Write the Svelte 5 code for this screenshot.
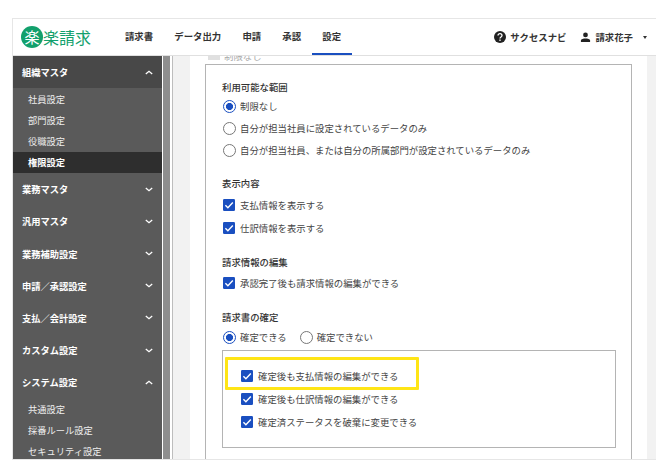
<script lang="ts">
  const nav = ['請求書', 'データ出力', '申請', '承認', '設定'];

  interface Group {
    name: string;
    open: boolean;
    items: string[];
  }

  const groups: Group[] = [
    { name: '組織マスタ', open: true, items: ['社員設定', '部門設定', '役職設定', '権限設定'] },
    { name: '業務マスタ', open: false, items: [] },
    { name: '汎用マスタ', open: false, items: [] },
    { name: '業務補助設定', open: false, items: [] },
    { name: '申請／承認設定', open: false, items: [] },
    { name: '支払／会計設定', open: false, items: [] },
    { name: 'カスタム設定', open: false, items: [] },
    { name: 'システム設定', open: true, items: ['共通設定', '採番ルール設定', 'セキュリティ設定'] }
  ];
</script>

{#snippet radio(label: string, on: boolean)}
  <div class="opt short">
    <span class="radio" class:on></span>
    <span>{label}</span>
  </div>
{/snippet}

{#snippet check(label: string)}
  <div class="opt">
    <svg class="check" viewBox="0 0 12 12" width="12" height="12">
      <rect width="12" height="12" rx="1.2" fill="#1a4fc0" />
      <path d="M2.4 6.2 4.900 8.700 9.800 3.400" fill="none" stroke="#fff" stroke-width="1.4" />
    </svg>
    <span>{label}</span>
  </div>
{/snippet}

<div class="frame">
  <header>
    <div class="logo">
      <span class="badge">楽</span>
      <span class="word">楽請求</span>
    </div>
    <nav>
      {#each nav as n}
        <span class="tab" class:active={n === '設定'}>{n}</span>
      {/each}
    </nav>
    <div class="right">
      <svg viewBox="0 0 24 24" width="12" height="12">
        <circle cx="12" cy="12" r="12" fill="#222" />
        <path d="M8 9.2a4 4 0 0 1 8 0c0 3-4 2.800-4 6" fill="none" stroke="#fff" stroke-width="2.6" />
        <rect x="10.600" y="17" width="2.800" height="2.800" fill="#fff" />
      </svg>
      <span class="help">サクセスナビ</span>
      <svg class="user" viewBox="0 0 12 12" width="11" height="11">
        <circle cx="6" cy="3.2" r="2.600" fill="#222" />
        <path d="M1 11V9.300C1 7.600 4 7 6 7s5 .6 5 2.300V11Z" fill="#222" />
      </svg>
      <span>請求花子</span>
      <span class="caret"></span>
    </div>
  </header>

  <div class="body">
    <aside>
      {#each groups as g, gi}
        <div class="group" class:first={gi === 0}>
          <span>{g.name}</span>
          <svg viewBox="0 0 10 6" width="8" height="5">
            <path d={g.open ? 'M1 5 5 1.500 9 5' : 'M1 1 5 4.500 9 1'} fill="none" stroke="#fff" stroke-width="1.600" />
          </svg>
        </div>
        {#if g.items.length}
          <div class="items">
            {#each g.items as item}
              <div class="item" class:current={item === '権限設定'}>{item}</div>
            {/each}
          </div>
        {/if}
      {/each}
    </aside>
    <div class="scrollbar"></div>
    <main>
      <div class="panel">
        <div class="clipped">
          <span class="box"></span>
          <span class="faint">制限なし</span>
        </div>
        <div class="card">
          <h4 class="tight">利用可能な範囲</h4>
          {@render radio('制限なし', true)}
          {@render radio('自分が担当社員に設定されているデータのみ', false)}
          {@render radio('自分が担当社員、または自分の所属部門が設定されているデータのみ', false)}

          <h4 class="gap">表示内容</h4>
          {@render check('支払情報を表示する')}
          {@render check('仕訳情報を表示する')}

          <h4 class="wide">請求情報の編集</h4>
          {@render check('承認完了後も請求情報の編集ができる')}

          <h4 class="wide">請求書の確定</h4>
          <div class="inline">
            {@render radio('確定できる', true)}
            {@render radio('確定できない', false)}
          </div>
          <div class="sub">
            <div class="hl">{@render check('確定後も支払情報の編集ができる')}</div>
            {@render check('確定後も仕訳情報の編集ができる')}
            {@render check('確定済ステータスを破棄に変更できる')}
          </div>
        </div>
      </div>
    </main>
  </div>
</div>

<style>
  :global(body) {
    margin: 0;
    background: #fff;
  }
  .frame {
    box-sizing: border-box;
    width: 644px;
    height: 442px;
    margin: 18px 0 0 12px;
    border-top: 1px solid #e6e6e6;
    border-left: 1px solid #e6e6e6;
    border-bottom: 1px solid #e6e6e6;
    display: flex;
    flex-direction: column;
    overflow: hidden;
    font-family: "Noto Sans CJK JP", "Noto Sans", sans-serif;
    font-size: 10px;
    color: #333;
  }
  header {
    height: 36px;
    flex: none;
    display: flex;
    align-items: center;
    border-bottom: 1px solid #e0e0e0;
    background: #fff;
  }
  .logo {
    display: flex;
    align-items: center;
    width: 101.400px;
    padding-left: 8px;
    box-sizing: border-box;
    flex: none;
    color: #12a06c;
  }
  .badge {
    width: 22px;
    height: 22px;
    border-radius: 50%;
    background: #12a06c;
    color: #fff;
    font-size: 15px;
    line-height: 22px;
    text-align: center;
    flex: none;
  }
  .word {
    font-size: 16px;
    line-height: 22px;
    white-space: nowrap;
  }
  nav {
    display: flex;
    height: 100%;
  }
  .tab {
    display: flex;
    align-items: center;
    padding: 0 10.600px;
    font-weight: 700;
    font-size: 9.400px;
    color: #333;
    height: 100%;
    box-sizing: border-box;
    border-bottom: 2px solid transparent;
  }
  .tab.active {
    border-bottom-color: #1a4fc0;
  }
  .right {
    margin-left: auto;
    margin-right: 9px;
    display: flex;
    align-items: center;
    font-weight: 700;
    font-size: 9.400px;
    color: #333;
  }
  .help {
    margin-left: 4px;
  }
  .user {
    margin-left: 14px;
    margin-right: 4px;
  }
  .caret {
    margin-left: 10px;
    border-left: 2.500px solid transparent;
    border-right: 2.500px solid transparent;
    border-top: 3px solid #333;
  }
  .body {
    flex: 1;
    display: flex;
    min-height: 0;
  }
  aside {
    width: 149px;
    flex: none;
    background: #5a5a5a;
    color: #fff;
    overflow: hidden;
  }
  .group {
    height: 32.170px;
    display: flex;
    align-items: center;
    justify-content: space-between;
    padding: 0 9px;
    font-weight: 700;
    font-size: 9.250px;
  }
  .group.first {
    background: #484848;
  }
  .items {
    padding-top: 1px;
  }
  .item {
    height: 21px;
    line-height: 21px;
    padding-left: 15px;
    font-size: 9.250px;
    color: #eee;
  }
  .item.current {
    background: #2e2e2e;
    font-weight: 700;
    color: #fff;
  }
  .scrollbar {
    width: 7px;
    margin-left: 1px;
    background: #8e8e8e;
    flex: none;
  }
  main {
    flex: 1;
    min-width: 0;
    margin-left: 2px;
    border-left: 1px solid #bdbdbd;
    background: #f2f2f2;
    padding-left: 17px;
    padding-right: 9px;
    overflow: hidden;
  }
  .panel {
    background: #fff;
    padding: 0 15px;
    height: 100%;
    overflow: hidden;
  }
  .clipped {
    height: 8px;
    display: flex;
    align-items: flex-start;
    gap: 4px;
    overflow: hidden;
    font-size: 9.400px;
  }
  .box {
    width: 12px;
    height: 4px;
    background: #e0e0e0;
    margin-left: 3px;
  }
  .faint {
    color: #aaa;
    line-height: 1px;
  }
  .card {
    box-sizing: border-box;
    border: 1px solid #b4b4b4;
    padding: 15px 16px 0;
    height: 420px;
  }
  h4 {
    margin: 0 0 3px;
    font-size: 9.400px;
    font-weight: 500;
    line-height: 14px;
    color: #333;
  }
  h4.tight {
    margin-bottom: 1px;
  }
  h4.gap {
    margin-top: 15px;
  }
  h4.wide {
    margin-top: 16px;
    margin-bottom: 2px;
  }
  .opt {
    display: flex;
    align-items: center;
    height: 23px;
    font-size: 9.400px;
    color: #444;
    white-space: nowrap;
  }
  .opt.short {
    height: 22px;
  }
  .radio {
    box-sizing: border-box;
    width: 13px;
    height: 13px;
    margin: 0 4px 0 1px;
    border-radius: 50%;
    border: 1.300px solid #777;
    background: #fff;
    flex: none;
  }
  .radio.on {
    border-color: #1a4fc0;
    background: radial-gradient(circle, #1a4fc0 0 3.300px, #fff 3.800px);
  }
  .check {
    margin: 0 5px 0 1px;
    flex: none;
  }
  .inline {
    display: flex;
    gap: 12px;
  }
  .sub {
    box-sizing: border-box;
    border: 1px solid #b4b4b4;
    height: 98px;
    width: 394px;
    margin-top: 2px;
    padding: 13px 0 0 17px;
  }
  .hl {
    position: relative;
  }
  .hl::before {
    content: '';
    position: absolute;
    box-sizing: border-box;
    left: -15px;
    top: -7px;
    width: 194px;
    height: 33px;
    border: 3.400px solid #ffe516;
    border-radius: 1px;
    pointer-events: none;
  }
</style>
